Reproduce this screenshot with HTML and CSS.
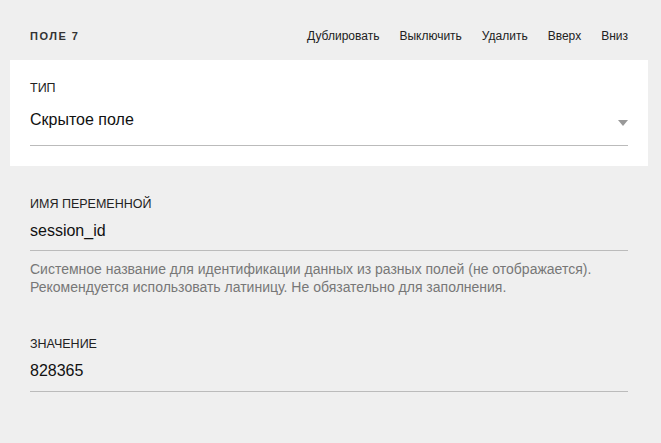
FILE: index.html
```html
<!DOCTYPE html>
<html lang="ru">
<head>
<meta charset="utf-8">
<title>Поле 7</title>
<link rel="stylesheet" href="styles.css">
</head>
<body>
<div class="page">
  <div class="head">
    <div class="title">ПОЛЕ 7</div>
    <nav class="actions">
      <a class="action">Дублировать</a>
      <a class="action">Выключить</a>
      <a class="action">Удалить</a>
      <a class="action">Вверх</a>
      <a class="action">Вниз</a>
    </nav>
  </div>
  <div class="card">
    <div class="label">Тип</div>
    <div class="select">
      <span class="value">Скрытое поле</span>
      <svg class="caret" width="10" height="6" viewBox="0 0 10 6"><path d="M0 0H10L5 6Z" fill="#999"/></svg>
    </div>
  </div>
  <div class="section first">
    <div class="label">Имя переменной</div>
    <div class="input"><span class="value">session_id</span></div>
    <div class="help">Системное название для идентификации данных из разных полей (не отображается).<br>Рекомендуется использовать латиницу. Не обязательно для заполнения.</div>
  </div>
  <div class="section second">
    <div class="label">Значение</div>
    <div class="input"><span class="value">828365</span></div>
  </div>
</div>
</body>
</html>
```
FILE: styles.css
```css
html, body {
  margin: 0;
  padding: 0;
  background: #efefef;
  font-family: "Liberation Sans", Arial, sans-serif;
  color: #222;
}
.page {
  padding: 0 13px 0 10px;
}
.head {
  height: 48px;
  padding: 12px 20px 0;
  display: flex;
  align-items: center;
  justify-content: space-between;
}
.title {
  font-size: 11px;
  font-weight: bold;
  letter-spacing: 1.5px;
  color: #333;
}
.actions {
  display: flex;
  gap: 20px;
}
.action {
  font-size: 12px;
  color: #222;
  cursor: pointer;
}
.card {
  background: #fff;
  padding: 20px 20px 20px;
}
.label {
  font-size: 12.5px;
  line-height: 16px;
  text-transform: uppercase;
  color: #222;
}
.value {
  font-size: 16px;
  line-height: 24px;
  color: #111;
}
.select {
  display: flex;
  justify-content: space-between;
  align-items: center;
  padding: 12px 0 13px;
  border-bottom: 1px solid #bbb;
}
.caret {
  margin-top: 6px;
}
.section {
  padding: 0 20px;
}
.section.first {
  padding-top: 30px;
}
.section.second {
  padding-top: 40px;
}
.input {
  display: flex;
  padding: 7px 0 7px;
  border-bottom: 1px solid #bbb;
}
.section.second .input {
  padding-bottom: 8px;
}
.help {
  margin-top: 9px;
  font-size: 14px;
  line-height: 18px;
  color: #777;
}
```
